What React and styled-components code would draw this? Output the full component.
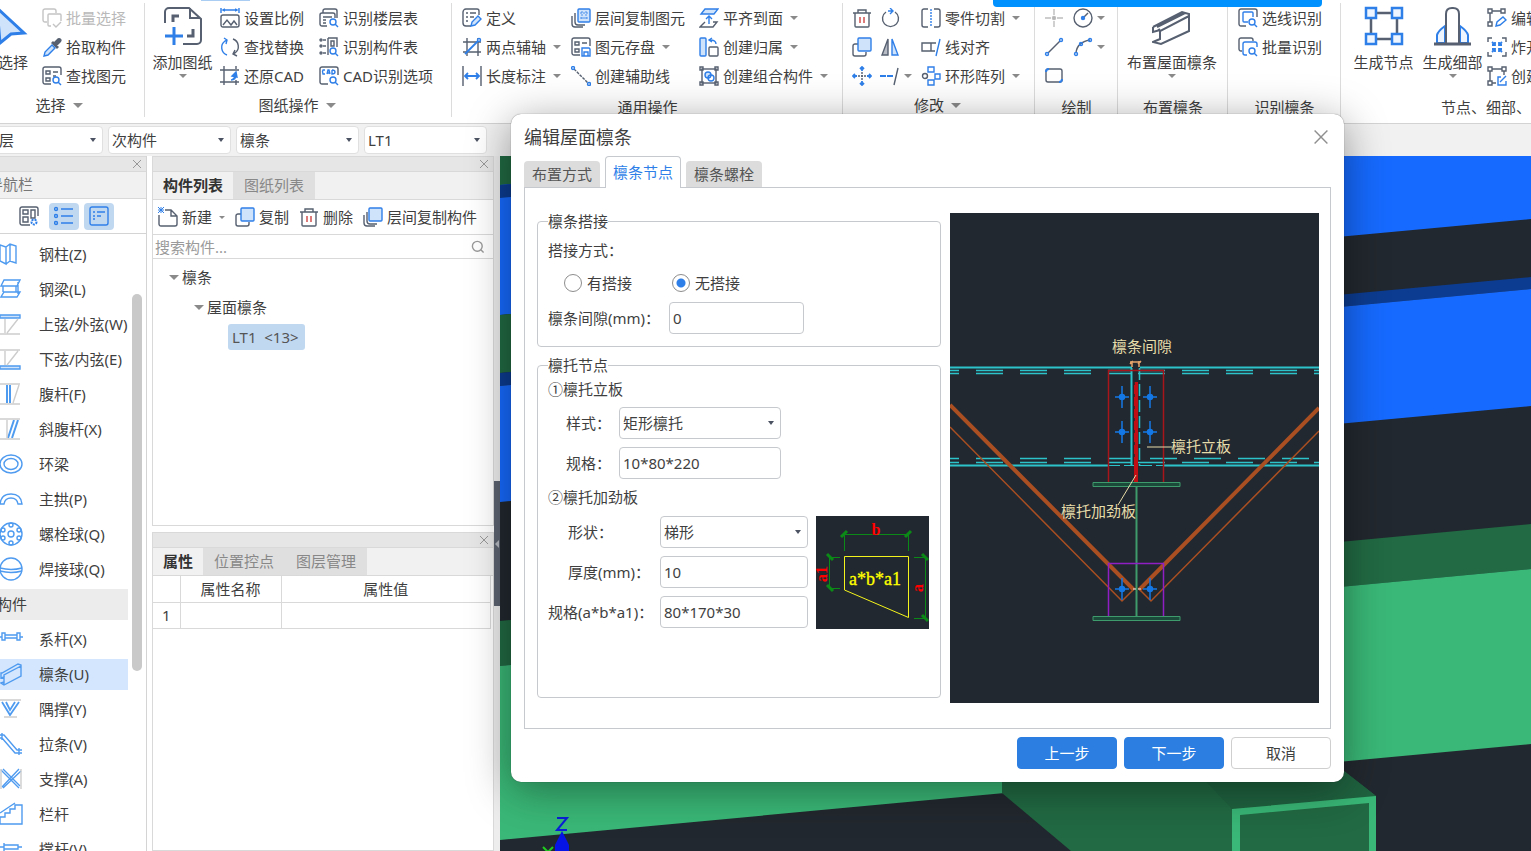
import React, { useState } from 'react';
import styled, { createGlobalStyle, css } from 'styled-components';

const GRAY = '#566070';
const BLUE = '#2f7fe8';
const PALE = '#cfe3fb';
const SKY = '#4f9bf0';
const MIST = '#cdcdcd';

const GlobalStyle = createGlobalStyle`
    * {
        box-sizing: border-box;
    }
    body {
        margin: 0;
        background: #fff;
        color: #3f3f3f;
        font-family: "Noto Sans", "Noto Sans CJK SC", sans-serif;
        font-size: 15px;
        line-height: 18px;
    }
    button, input, select {
        font: inherit;
        color: inherit;
    }
    button {
        padding: 0;
        border: 0;
        background: none;
        white-space: nowrap;
        cursor: pointer;
    }
`;

/* 20 x 20 toolbar glyphs */
const glyphs = {
    batch: <g stroke="#c4c4c4"><path d="M5 14H3a2 2 0 0 1-2-2V3a2 2 0 0 1 2-2h9a2 2 0 0 1 2 2v2" /><path d="M9 18H7a1 1 0 0 1-1-1V7a1 1 0 0 1 1-1h11a1 1 0 0 1 1 1v6M11 16l3 3 5-5" /></g>,
    pick: <><path d="M11 5l5 5-1 1-5-5zM13 5l3-3q2-1 3 1 0 1-1 2l-3 3z" fill={GRAY} /><path d="M10 8l-7 7-1 4 4-1 7-7z" stroke={BLUE} fill={PALE} /></>,
    find: <><path d="M9 18H3a2 2 0 0 1-2-2V3a2 2 0 0 1 2-2h14a2 2 0 0 1 2 2v6M4 5h4v3H4zM11 6h5M4 12h4v3H4zM11 10h3" /><circle cx="14" cy="14" r="3" stroke={BLUE} /><path d="M16 16l3 3" stroke={BLUE} /></>,
    scale: <><path d="M1 0v5M19 0v5M3 2h14M5 1L3 2l2 1M15 1l2 1-2 1" stroke={BLUE} /><rect x="1" y="7" width="18" height="12" rx="2" /><path d="M3 17l4-5 4 5 3-4 3 4" /></>,
    replace: <><path d="M7 18A8 8 0 0 1 5 4l2-1M4 1l3 2-1 4" stroke={BLUE} /><path d="M13 2a8 8 0 0 1 2 14l-2 1M17 19l-4-2 2-4" /></>,
    restore: <><path d="M4 0v19M0 4h19M0 16h19M16 0v3M16 14v5" /><path d="M11 14q5 0 5-5M16 6l-4 4 5 1z" stroke={BLUE} fill={BLUE} /></>,
    floorList: <><path d="M8 18H3a2 2 0 0 1-2-2V7a2 2 0 0 1 2-2h11a2 2 0 0 1 2 2v3M4 5V3a2 2 0 0 1 2-2h10a2 2 0 0 1 2 2v7M4 9h9M4 12h3M4 15h3" /><circle cx="14" cy="14" r="3" stroke={BLUE} /><path d="M16 16l3 3" stroke={BLUE} /></>,
    partList: <><path d="M9 1h9v9M9 1v17M12 4h3v5h-3zM4 3h3M4 9h3M4 16h3" /><circle cx="2" cy="3" r="1" /><circle cx="2" cy="9" r="1" /><circle cx="2" cy="16" r="1" /><circle cx="14" cy="14" r="3" stroke={BLUE} /><path d="M16 16l3 3" stroke={BLUE} /></>,
    cadOptions: <><path d="M9 18H3a2 2 0 0 1-2-2V3a2 2 0 0 1 2-2h14a2 2 0 0 1 2 2v6" /><path d="M6 4H4q-1 1 0 4h2M8 8l1-4h1l1 4M8 7h3M13 4v4q3 0 3-2t-3-2" stroke={BLUE} /><circle cx="14" cy="14" r="3" stroke={BLUE} /><path d="M16 16l3 3" stroke={BLUE} /></>,
    define: <><path d="M9 18H4a3 3 0 0 1-3-3V4a3 3 0 0 1 3-3h11a2 2 0 0 1 2 2v4M4 5h2M8 5h6M4 9h2M8 9h4M4 13h2" /><path d="M9 18l1-4 6-6 3 3-6 6z" stroke={BLUE} fill={PALE} /></>,
    twoPoint: <><path d="M5 1v18M16 1v18M1 5h18M1 15h18" /><path d="M3 17L17 3" stroke={BLUE} strokeWidth="1.8" /><circle cx="17" cy="3" r="1.5" stroke={BLUE} fill="#fff" /></>,
    length: <><path d="M1 0v20M19 0v20" /><path d="M3 10h14M6 7l-3 3 3 3M14 7l3 3-3 3" stroke={BLUE} strokeWidth="1.8" /></>,
    copyLayer: <><path d="M4 5v9a3 3 0 0 0 3 3h7M1 8v8a3 3 0 0 0 3 3h8" /><rect x="7" y="1" width="12" height="13" rx="1" stroke={BLUE} fill={PALE} /><path d="M9 5h8M9 10h8M11 3v9M15 3v9" stroke={BLUE} strokeWidth=".8" strokeDasharray="2 1" /></>,
    copyParts: <><path d="M4 5v9a3 3 0 0 0 3 3h7M1 8v8a3 3 0 0 0 3 3h8" /><rect x="6" y="1" width="13" height="13" rx="1" stroke={BLUE} fill={PALE} /></>,
    saveElement: <><path d="M9 18H3a2 2 0 0 1-2-2V3a2 2 0 0 1 2-2h14a2 2 0 0 1 2 2v6M4 5h4v3H4zM11 6h5M4 12h4v3H4z" /><path d="M11 11h7l1 1v7h-8zM13 19v-4h4v4" stroke={BLUE} /></>,
    guide: <><path d="M3 3l14 14" strokeDasharray="3 1" /><circle cx="2" cy="2" r="1.5" stroke={BLUE} /><circle cx="18" cy="18" r="1.5" stroke={BLUE} /></>,
    alignFace: <><path d="M6 1h13l-4 5H2z" stroke={BLUE} fill={PALE} /><path d="M10 16V8M7 11l3-3 3 3" stroke={BLUE} /><path d="M6 14l-5 5h13l4-5h-4" /></>,
    belong: <><rect x="1" y="1" width="6" height="18" rx="1" stroke={BLUE} fill={PALE} /><rect x="10" y="10" width="9" height="9" rx="1" /><path d="M17 7q0-4-6-4M13 1l-3 2 3 2" stroke={BLUE} /></>,
    combine: <><rect x="3" y="3" width="14" height="14" /><path d="M1 1h3v3H1zM16 1h3v3h-3zM1 16h3v3H1zM16 16h3v3h-3z" /><circle cx="9" cy="9" r="3" stroke={BLUE} fill={PALE} /><circle cx="12" cy="12" r="3" stroke={BLUE} /></>,
    trash: <><path d="M1 5h18M6 5V2h8v3M3 5v13a1 1 0 0 0 1 1h12a1 1 0 0 0 1-1V5" /><path d="M8 9v6M12 9v6" stroke="#cf4444" /></>,
    rotate: <><path d="M6 4a8 8 0 1 0 9 0" /><path d="M8 3h4M10 0l3 3-3 3" stroke={BLUE} /></>,
    copy: <><path d="M6 7H3a2 2 0 0 0-2 2v8a2 2 0 0 0 2 2h9a2 2 0 0 0 2-2v-2" /><rect x="6" y="1" width="13" height="13" rx="1" stroke={BLUE} fill={PALE} /></>,
    mirror: <><path d="M8 2v16H2z" fill="#b7bcc4" /><path d="M12 2v16h6z" stroke={BLUE} fill={PALE} /></>,
    move: <><path d="M10 6v8M6 10h8" strokeDasharray="2 1" /><path d="M10 5V1M8 3l2-2 2 2M10 15v4M8 17l2 2 2-2M5 10H1M3 8l-2 2 2 2M15 10h4M17 8l2 2-2 2" stroke={BLUE} strokeWidth="1.8" /></>,
    split: <><path d="M0 10h14" stroke={BLUE} strokeDasharray="6 1" strokeWidth="1.8" /><path d="M18 2l-4 17" /></>,
    cutPart: <><path d="M7 1H3a2 2 0 0 0-2 2v14a2 2 0 0 0 2 2h4M13 1h4a2 2 0 0 1 2 2v14a2 2 0 0 1-2 2h-4" /><path d="M10 1v18" stroke={BLUE} strokeDasharray="2 1" /></>,
    alignLine: <><path d="M10 6H1v8h9zM10 6h5M10 14h4" /><path d="M19 2l-4 17" stroke={BLUE} /></>,
    array: <><path d="M7 1h6v5H7z" stroke={BLUE} /><circle cx="4" cy="10" r="2.5" /><path d="M14 8h5v5h-5zM7 14h6v5H7z" stroke={BLUE} /></>,
    point: <g stroke="#bdbdbd"><path d="M10 1v6M10 13v6M1 10h6M13 10h6" /><circle cx="10" cy="10" r="1.5" fill="#aaa" /></g>,
    circle: <><circle cx="10" cy="10" r="9" /><path d="M10 10l5-5" /><circle cx="10" cy="10" r="1.5" stroke={BLUE} fill={BLUE} /></>,
    line: <><path d="M4 16L16 4" /><circle cx="3" cy="17" r="1.5" stroke={BLUE} /><circle cx="17" cy="3" r="1.5" stroke={BLUE} /></>,
    arc: <><path d="M3 16Q4 5 17 3" /><circle cx="3" cy="17" r="1.5" stroke={BLUE} /><circle cx="8" cy="7" r="1.5" stroke={BLUE} /><circle cx="17" cy="3" r="1.5" stroke={BLUE} /></>,
    rect: <><rect x="2" y="3" width="16" height="13" rx="2" /><path d="M2 6q0-3 3-3M18 13q0 3-3 3" stroke={BLUE} strokeWidth="2" /></>,
    lineDetect: <><path d="M8 18H3a2 2 0 0 1-2-2V3a2 2 0 0 1 2-2h14a2 2 0 0 1 2 2v6" /><path d="M10 14H6a1 1 0 0 1-1-1V5a1 1 0 0 1 1-1h8a1 1 0 0 1 1 1v4" stroke={BLUE} /><circle cx="14" cy="14" r="3" stroke={BLUE} /><path d="M16 16l3 3" stroke={BLUE} /></>,
    batchDetect: <><path d="M4 14H3a2 2 0 0 1-2-2V3a2 2 0 0 1 2-2h10a2 2 0 0 1 2 2v1" /><path d="M9 18H7a2 2 0 0 1-2-2V7a2 2 0 0 1 2-2h10a2 2 0 0 1 2 2v3" stroke={BLUE} /><circle cx="14" cy="14" r="3" stroke={BLUE} /><path d="M16 16l3 3" stroke={BLUE} /></>,
    editNode: <><path d="M1 1h4v4H1zM14 1h4v4h-4zM1 14h4v4H1zM5 3h9M3 5v9" /><path d="M9 18l1-4 6-5 3 3-6 5z" stroke={BLUE} /></>,
    explode: <><path d="M1 5V1h4M15 1h4v4M1 15v4h4M15 19h4v-4" /><path d="M5 5l3 3M15 5l-3 3M5 15l3-3M15 15l-3-3M5 8h3V5M12 5v3h3M5 12h3v3M12 15v-3h3" stroke={BLUE} strokeWidth="1.8" /></>,
    createNode: <><path d="M1 1h4v4H1zM15 1h4v4h-4zM1 15h4v4H1zM5 3h10M3 5v10M17 5v4M5 17h4" /><path d="M14 11h-3v8h8v-4M13 16l6-6" stroke={BLUE} /></>,
    add: <><path d="M7 3h6l6 6v8a2 2 0 0 1-2 2H3a2 2 0 0 1-2-2V8M13 3v6h6" /><path d="M0 0l6 6M6 0L0 6M3 0v6M0 3h6" stroke={BLUE} strokeWidth="1" /></>,
    modules: <><path d="M11 19H3a2 2 0 0 1-2-2V3a2 2 0 0 1 2-2h14a2 2 0 0 1 2 2v7M4 4h5v4H4zM12 4h4v8h-4zM4 11h5v5H4z" /><circle cx="15" cy="16" r="2.5" stroke={BLUE} strokeDasharray="2 1" strokeWidth="2" /></>,
    list: <g stroke={BLUE}><path d="M7 3h12M7 10h12M7 17h12" /><circle cx="2" cy="3" r="1.5" /><circle cx="2" cy="10" r="1.5" /><circle cx="2" cy="17" r="1.5" /></g>,
    detail: <g stroke={BLUE}><rect x="1" y="1" width="18" height="18" rx="2" /><path d="M4 6h2M8 6h8M4 10h2M8 10h4M4 13h2" /></g>,
    search: <g stroke="#9a9a9a" strokeWidth="2"><circle cx="9" cy="9" r="7" /><path d="M14 14l4 4" /></g>,
    close: <path d="M2 2l16 16M18 2L2 18" stroke="#8f8f8f" strokeWidth="1.8" />
};

/* 40 x 40 glyphs above the big ribbon buttons */
const bigGlyphs = {
    cursor: <path d="M4 2L31 27 18 28 7 37z" stroke={BLUE} fill={PALE} strokeWidth="3" />,
    addSheet: <><path d="M2 17V6a4 4 0 0 1 4-4h20l12 11v21a4 4 0 0 1-4 4H20M27 2v10h10" /><path d="M10 16v-6h6M24 30h6v-7" strokeWidth="3" /><path d="M11 21v18M2 30h18" stroke={BLUE} strokeWidth="3" /></>,
    purlin: <path d="M1 21L30 6l7 2v17L9 38l-8-2 7-3V25L37 10M1 21v5l7-2M5 21L33 7M5 25l3-2" />,
    node: <><path d="M11 7h18M7 11v18M33 11v18M11 33h18" strokeWidth="2.5" /><path d="M2 2h10v10H2zM28 2h10v10H28zM2 28h10v10H2zM28 28h10v10H28z" stroke={BLUE} fill="#eef5ff" strokeWidth="2.5" /></>,
    part: <><path d="M12 20q-7 5-8 9v8h8zM27 20q7 5 8 9v8h-8z" stroke={BLUE} fill="#eef5ff" /><path d="M13 37V8q0-6 6-6h1q6 0 6 6v29" fill="#fff" /><path d="M1 38h37" strokeWidth="3" /></>
};

/* 24 x 24 member glyphs */
const memberGlyphs = {
    column: <path d="M1 3l6 2v17l-6-3zM7 5l4-3 6 2v17l-6-2-4 3M11 2v17" />,
    beam: <path d="M5 3h16l-3 6H2zM4 9v6M17 9v6M5 15h16l-3 5H2zM19 5v12" />,
    topChord: <><path d="M1 3h20v3H1z" fill={PALE} /><path d="M6 7v14M19 7L8 21M1 22h20" stroke={MIST} /></>,
    bottomChord: <><path d="M1 19h20v3H1z" fill={PALE} /><path d="M6 4v14M19 4L8 18M1 3h20" stroke={MIST} /></>,
    web: <><path d="M8 3v18M11 3v18" strokeWidth="2" /><path d="M1 2h20M1 22h20M20 3l-6 18" stroke={MIST} /></>,
    diagonal: <><path d="M15 3L9 21M19 3l-6 18" strokeWidth="2" /><path d="M1 2h20M1 22h20M8 3v18" stroke={MIST} /></>,
    ring: <><ellipse cx="12" cy="12" rx="11" ry="9" /><ellipse cx="12" cy="12" rx="7" ry="5.5" /></>,
    arch: <path d="M1 17q1-10 11-10t11 10h-4q-1-6-7-6t-7 6z" />,
    boltBall: <><circle cx="12" cy="12" r="11" /><circle cx="12" cy="12" r="3" /><circle cx="12" cy="3" r="2" /><circle cx="12" cy="21" r="2" /><circle cx="4" cy="8" r="2" /><circle cx="20" cy="8" r="2" /><circle cx="4" cy="16" r="2" /><circle cx="20" cy="16" r="2" /></>,
    weldBall: <><circle cx="12" cy="12" r="11" /><path d="M1 11q11 3 22 0M1 14q11 3 22 0" /></>,
    tie: <path d="M6 8h12M6 11h12M3 6h3v7H3zM18 6h3v7h-3zM0 10h3M21 10h3" />,
    purlin: <path d="M2 11v5l3-1v5l-3 1 3 2 17-9V3l-3-1L3 11zM5 16V13L22 4M5 22v-5" />,
    knee: <><path d="M3 5l8 13L20 5M7 5l4 8 5-8" strokeWidth="1.8" /><path d="M1 3h21M5 20h13" stroke={MIST} /></>,
    brace: <path d="M1 3h4l13 15h5M1 6h2l13 15h7M3 1v7M20 16v7" />,
    cross: <><path d="M2 3l18 18M4 2l17 17M20 2L3 20M22 4L4 21" /><path d="M2 2v20M22 2v20" stroke={MIST} /></>,
    railing: <path d="M1 22v-7h5v-4h5V7h5V3h7v19zM1 11L16 1" />,
    strut: <path d="M5 8h14v4H5zM1 10h4M19 10h4M5 6v8" />
};

const Svg = styled.svg`
    flex: none;
    display: block;
    width: ${props => props.$size}px;
    height: ${props => props.$size}px;
    fill: none;
`;

const Glyph = ({ name, size = 20 }) => (
    <Svg $size={size} viewBox="0 0 20 20" stroke={GRAY} strokeWidth="1.4" aria-hidden="true">
        {glyphs[name]}
    </Svg>
);

const Caret = styled.i`
    flex: none;
    width: 0;
    height: 0;
    border: ${props => props.$size || 4}px solid transparent;
    border-top-color: #8a8a8a;
    border-bottom-width: 0;
`;

/* the left edge of the window runs past the screen */
const Screen = styled.div`
    position: relative;
    height: 100vh;
    overflow: hidden;
`;

const Shell = styled.div`
    display: flex;
    flex-direction: column;
    height: 100%;
    margin-left: -24px;
`;

const Notice = styled.div`
    position: absolute;
    top: 0;
    left: 993px;
    right: 209px;
    height: 7px;
    border-radius: 0 0 4px 4px;
    background: #0091ff;
`;

const Accent = styled.div`
    position: absolute;
    top: 0;
    left: 201px;
    width: 49px;
    height: 1px;
    background: #a9cdf3;
`;

const Ribbon = styled.header`
    display: flex;
    flex: none;
    height: 124px;
    border-bottom: 1px solid #d3d3d3;
`;

const Group = styled.section`
    position: relative;
    flex: none;
    width: ${props => props.$width}px;
    &::after {
        content: '';
        position: absolute;
        top: 3px;
        right: 0;
        bottom: 6px;
        width: 1px;
        background: #dcdcdc;
    }
`;

const Tools = styled.div`
    display: flex;
    height: 90px;
    padding: 3px 0 0 ${props => props.$indent || 0}px;
`;

const Column = styled.div`
    flex: none;
    width: ${props => (props.$width ? `${props.$width}px` : 'auto')};
`;

const Tool = styled.button`
    display: flex;
    align-items: center;
    gap: 4px;
    height: 29px;
    color: ${props => (props.disabled ? '#b9b9b9' : 'inherit')};
    ${Caret} {
        margin-left: ${props => (props.$bare ? 0 : 3)}px;
    }
`;

const BigTool = styled.button`
    flex: none;
    display: flex;
    flex-direction: column;
    align-items: center;
    width: ${props => props.$width}px;
    padding-top: 3px;
    span {
        margin-top: 6px;
        line-height: 20px;
    }
    ${Caret} {
        margin-top: 2px;
    }
`;

const GroupLabel = styled.div`
    display: flex;
    align-items: center;
    justify-content: center;
    gap: 7px;
    padding: ${props => (props.$expand ? '6px 3px 0 0' : '8px 0 0')};
`;

const ribbon = [
    {
        label: '选择', expand: true, width: 169, indent: 8,
        big: [{ icon: 'cursor', text: '选择', width: 58 }],
        columns: [{ tools: [['batch', '批量选择', false, true], ['pick', '拾取构件'], ['find', '查找图元']] }]
    },
    {
        label: '图纸操作', expand: true, width: 307,
        big: [{ icon: 'addSheet', text: '添加图纸', caret: true, width: 75 }],
        columns: [
            { width: 99, tools: [['scale', '设置比例'], ['replace', '查找替换'], ['restore', '还原CAD']] },
            { tools: [['floorList', '识别楼层表'], ['partList', '识别构件表'], ['cadOptions', 'CAD识别选项']] }
        ]
    },
    {
        label: '通用操作', width: 391, indent: 10,
        columns: [
            { width: 109, tools: [['define', '定义'], ['twoPoint', '两点辅轴', true], ['length', '长度标注', true]] },
            { width: 128, tools: [['copyLayer', '层间复制图元'], ['saveElement', '图元存盘', true], ['guide', '创建辅助线']] },
            { tools: [['alignFace', '平齐到面', true], ['belong', '创建归属', true], ['combine', '创建组合构件', true]] }
        ]
    },
    {
        label: '修改', expand: true, width: 192, indent: 9,
        columns: [
            { width: 28, tools: [['trash'], ['copy'], ['move']] },
            { width: 41, tools: [['rotate'], ['mirror'], ['split', '', true]] },
            { tools: [['cutPart', '零件切割', true], ['alignLine', '线对齐'], ['array', '环形阵列', true]] }
        ]
    },
    {
        label: '绘制', width: 83, indent: 9,
        columns: [
            { width: 29, tools: [['point'], ['line'], ['rect']] },
            { tools: [['circle', '', true], ['arc', '', true]] }
        ]
    },
    {
        label: '布置檩条', width: 110,
        big: [{ icon: 'purlin', text: '布置屋面檩条', caret: true, width: 108 }],
        columns: []
    },
    {
        label: '识别檩条', width: 113, indent: 10,
        columns: [{ tools: [['lineDetect', '选线识别'], ['batchDetect', '批量识别']] }]
    },
    {
        label: '节点、细部、零件', width: 320, indent: 8,
        big: [
            { icon: 'node', text: '生成节点', width: 69 },
            { icon: 'part', text: '生成细部', caret: true, width: 69 }
        ],
        columns: [{ tools: [['editNode', '编辑节点'], ['explode', '炸开节点'], ['createNode', '创建节点']] }]
    }
];

const RibbonGroup = ({ group }) => (
    <Group $width={group.width}>
        <Tools $indent={group.indent}>
            {(group.big || []).map(item => (
                <BigTool key={item.text} $width={item.width}>
                    <Svg $size={40} viewBox="0 0 40 40" stroke={GRAY} strokeWidth="2" aria-hidden="true">
                        {bigGlyphs[item.icon]}
                    </Svg>
                    <span>{item.text}</span>
                    {item.caret && <Caret />}
                </BigTool>
            ))}
            {group.columns.map((column, i) => (
                <Column key={i} $width={column.width}>
                    {column.tools.map(([icon, text, caret, disabled]) => (
                        <Tool key={icon} disabled={disabled} $bare={!text} aria-label={text || icon}>
                            <Glyph name={icon} />
                            {text}
                            {caret && <Caret />}
                        </Tool>
                    ))}
                </Column>
            ))}
        </Tools>
        <GroupLabel $expand={group.expand}>
            {group.label}
            {group.expand && <Caret $size={5} />}
        </GroupLabel>
    </Group>
);

const FilterBar = styled.div`
    display: flex;
    flex: none;
    align-items: center;
    gap: 5px;
    height: 32px;
    padding-left: 4px;
    background: #f1f1f1;
`;

const Picker = styled.span`
    position: relative;
    display: block;
    flex: none;
    width: ${props => props.$width}px;
    select {
        appearance: none;
        display: block;
        width: 100%;
        height: ${props => props.$height}px;
        padding: 0 20px 0 3px;
        border: 1px solid ${props => props.$line || '#c6c9cd'};
        border-radius: 4px;
        background: #fff;
        outline: 0;
    }
    &::after {
        content: '';
        position: absolute;
        top: 50%;
        right: 7px;
        margin-top: -2px;
        border: 3px solid transparent;
        border-top: 4px solid #4b5261;
        border-bottom: 0;
        pointer-events: none;
    }
`;

const Workspace = styled.main`
    display: flex;
    flex: 1;
    min-height: 0;
`;

const Nav = styled.nav`
    display: flex;
    flex: none;
    flex-direction: column;
    width: 171px;
    margin-right: 5px;
    border-right: 1px solid #d4d4d4;
`;

const Grip = styled.div`
    display: flex;
    flex: none;
    align-items: center;
    justify-content: flex-end;
    height: 16px;
    padding-right: 4px;
    border: solid #d9d9d9;
    border-width: 1px 0;
    background: #e6e6e6;
`;

const NavTitle = styled.div`
    flex: none;
    height: 27px;
    padding: 3px 0 0 12px;
    border-bottom: 1px solid #d9d9d9;
    background: #f1f1f1;
    color: #777;
`;

const NavModes = styled.div`
    display: flex;
    flex: none;
    align-items: center;
    gap: 5px;
    height: 35px;
    padding-left: 38px;
    border-bottom: 1px solid #d4d4d4;
`;

const Mode = styled.button`
    display: grid;
    place-items: center;
    width: 30px;
    height: 27px;
    border-radius: 4px;
    background: ${props => (props.$on ? '#c1d8f1' : 'transparent')};
`;

const NavBody = styled.div`
    display: flex;
    flex: 1;
    min-height: 0;
    overflow: hidden;
`;

const Members = styled.ul`
    display: flex;
    flex: 1;
    flex-direction: column;
    gap: 4px;
    min-width: 0;
    margin: 0;
    padding: 5px 0 0;
    list-style: none;
`;

const member = css`
    display: flex;
    align-items: center;
    width: 100%;
    height: 31px;
    padding-bottom: 2px;
    overflow: hidden;
    white-space: nowrap;
`;

const Member = styled.button`
    ${member}
    gap: 16px;
    padding-left: 23px;
    background: ${props => (props.$active ? '#d3e6fd' : 'transparent')};
`;

const MemberHeading = styled.div`
    ${member}
    padding-left: 6px;
    background: #ececec;
`;

const ScrollTrack = styled.div`
    flex: none;
    width: 18px;
    padding: 60px 4px 0;
`;

const ScrollThumb = styled.div`
    height: 377px;
    border-radius: 5px;
    background: #c9c9c9;
`;

const members = [
    ['column', '钢柱(Z)'],
    ['beam', '钢梁(L)'],
    ['topChord', '上弦/外弦(W)'],
    ['bottomChord', '下弦/内弦(E)'],
    ['web', '腹杆(F)'],
    ['diagonal', '斜腹杆(X)'],
    ['ring', '环梁'],
    ['arch', '主拱(P)'],
    ['boltBall', '螺栓球(Q)'],
    ['weldBall', '焊接球(Q)'],
    [null, '次构件'],
    ['tie', '系杆(X)'],
    ['purlin', '檩条(U)'],
    ['knee', '隅撑(Y)'],
    ['brace', '拉条(V)'],
    ['cross', '支撑(A)'],
    ['railing', '栏杆'],
    ['strut', '撑杆(V)']
];

const Side = styled.div`
    display: flex;
    flex: none;
    flex-direction: column;
    gap: 6px;
    width: 342px;
`;

const Panel = styled.section`
    display: flex;
    flex: ${props => (props.$height ? 'none' : 1)};
    flex-direction: column;
    height: ${props => (props.$height ? `${props.$height}px` : 'auto')};
    border: 1px solid #d9d9d9;
    border-top: 0;
`;

const PanelTabs = styled.div`
    display: flex;
    flex: none;
    height: 28px;
    border-bottom: 1px solid #d9d9d9;
    background: #f1f1f1;
`;

const PanelTab = styled.button`
    padding: 0 ${props => (props.$active ? 10 : 11)}px 2px;
    background: ${props => (props.$active ? '#f1f1f1' : '#dfdfdf')};
    color: ${props => (props.$active ? '#333' : '#888')};
    font-weight: ${props => (props.$active ? 'bold' : 'normal')};
`;

const PanelTools = styled.div`
    display: flex;
    flex: none;
    align-items: center;
    gap: 10px;
    height: 35px;
    padding-left: 5px;
    border-bottom: 1px solid #d9d9d9;
`;

const SearchBox = styled.label`
    display: flex;
    flex: none;
    align-items: center;
    height: 24px;
    padding: 0 8px 0 2px;
    border-bottom: 1px solid #d9d9d9;
    input {
        flex: 1;
        min-width: 0;
        padding: 0;
        border: 0;
        outline: 0;
        background: none;
    }
    input::placeholder {
        color: #9a9a9a;
        opacity: 1;
    }
`;

const Tree = styled.div`
    padding-top: 3px;
`;

const Branch = styled.div`
    display: flex;
    align-items: center;
    gap: 3px;
    height: 30px;
    padding-left: ${props => props.$indent}px;
`;

const Leaf = styled.button`
    height: 26px;
    padding: 0 6px 0 4px;
    border-radius: 3px;
    background: #c1d8f1;
    color: #555;
`;

const Properties = styled.table`
    width: 338px;
    border-collapse: collapse;
    table-layout: fixed;
    th, td {
        height: 26px;
        padding: 0;
        border: 1px solid #d9d9d9;
        border-top: 0;
        font-weight: normal;
        text-align: center;
    }
    th:first-child, td:first-child {
        width: 27px;
        border-left: 0;
    }
    th:nth-child(2) {
        width: 101px;
    }
`;

const Splitter = styled.div`
    flex: none;
    width: 6px;
    padding-top: 325px;
    background: #ededed;
`;

const SplitterHandle = styled.button`
    display: flex;
    align-items: center;
    justify-content: center;
    width: 100%;
    height: 125px;
    background: #5c6370;
    &::before {
        content: '';
        border: 4px solid transparent;
        border-right-color: #b5b9c0;
        border-left: 0;
    }
`;

const Viewport = styled.div`
    flex: 1;
    min-width: 0;
    background: #22282f;
    svg {
        display: block;
        width: 100%;
        height: 100%;
    }
`;

const Scene = () => (
    <svg viewBox="500 156 1031 695" preserveAspectRatio="xMinYMin slice" aria-hidden="true">
        <path d="M500 156H1531V219L500 315z" fill="#166aff" />
        <path d="M500 156h60v23l-60 6z" fill="#216a43" />
        <path d="M500 185l60-6v13l-60 6z" fill="#0c3c91" />
        <path d="M500 315l60-6v58l-60 6z" fill="#216a43" />
        <path d="M500 373L1531 277V289L500 386z" fill="#0c3c91" />
        <path d="M500 386L1531 289V406L500 502z" fill="#166aff" />
        <path d="M500 621L1531 524V569L500 666z" fill="#216a43" />
        <path d="M500 666L1531 569V744L500 840z" fill="#3ab877" />
        <path d="M1002 780H1344V771L1376 796V851H1071L1002 793z" fill="#216a43" />
        <path d="M1195 770h149v1l32 25-144 13z" fill="#1f6340" />
        <path d="M1232 851V809L1376 796V851H1369V803L1240 815V851z" fill="#3ab877" />
        <path d="M557 818h10l-10 12h10" stroke="#0a1fd8" strokeWidth="2" fill="none" />
        <path d="M562 831l7 14v6h-14v-6z" fill="#0714e6" />
        <path d="M543 847l5 5 5-5" stroke="#1fce1f" strokeWidth="2" fill="none" />
    </svg>
);

const Layer = styled.div`
    position: absolute;
    inset: 0;
    display: flex;
    align-items: flex-start;
    padding: 114px 187px 0 511px;
`;

const Dialog = styled.div`
    flex: 1;
    min-width: 820px;
    padding: 0 13px 13px;
    border-radius: 10px;
    background: #fff;
    box-shadow: 0 0 1px rgba(0, 0, 0, 0.6), 0 8px 44px rgba(0, 0, 0, 0.4);
`;

const TitleBar = styled.div`
    display: flex;
    align-items: center;
    justify-content: space-between;
    height: 42px;
    padding: 4px 2px 0 0;
    h1 {
        margin: 0;
        font-size: 18px;
        font-weight: normal;
    }
`;

const Tabs = styled.div`
    display: flex;
    align-items: flex-end;
    gap: 5px;
    height: 31px;
`;

const Tab = styled.button`
    height: 26px;
    padding: 0 8px;
    border-radius: 4px 4px 0 0;
    background: #dcdcdc;
    color: #555;
    ${props => props.$active && css`
        height: 32px;
        margin-bottom: -1px;
        padding: 0 7px 2px;
        border: 1px solid #c6c9cd;
        border-bottom: 0;
        background: #fff;
        color: ${BLUE};
    `}
`;

const Body = styled.div`
    display: flex;
    gap: 9px;
    padding: 25px 11px 25px 12px;
    border: 1px solid #c6c9cd;
`;

const Form = styled.form`
    display: flex;
    flex: none;
    flex-direction: column;
    gap: 10px;
    width: 404px;
    padding-bottom: 5px;
`;

const Fieldset = styled.fieldset`
    flex: ${props => (props.$grow ? 1 : 'none')};
    min-width: 0;
    margin: 0;
    padding: 0 10px 12px;
    border: 1px solid #c6c9cd;
    border-radius: 4px;
    legend {
        padding: 0;
        line-height: 17px;
        margin-bottom: 1px;
    }
`;

const Caption = styled.div`
    display: flex;
    align-items: center;
    height: ${props => (props.$tall ? 38 : 28)}px;
`;

const Radios = styled.div`
    display: flex;
    height: 28px;
    margin-bottom: 5px;
    padding-left: 16px;
`;

const Radio = styled.label`
    display: flex;
    align-items: center;
    gap: 5px;
    width: 108px;
    input {
        appearance: none;
        width: 18px;
        height: 18px;
        margin: 0;
        border: 1px solid #8d8d8d;
        border-radius: 50%;
        background: #fff;
    }
    input:checked {
        background: radial-gradient(circle, ${BLUE} 4px, #fff 5px);
    }
`;

const Field = styled.div`
    display: flex;
    align-items: center;
    height: ${props => (props.$tight ? 32 : 40)}px;
    label {
        flex: none;
        width: ${props => props.$label}px;
        padding-left: ${props => props.$indent || 0}px;
        white-space: nowrap;
    }
`;

const TextBox = styled.input`
    width: ${props => props.$width}px;
    height: 32px;
    padding: 0 3px;
    border: 1px solid #c6c9cd;
    border-radius: 4px;
    background: #fff;
    outline: 0;
`;

const Stiffener = styled.div`
    display: flex;
    align-items: center;
    gap: 8px;
    padding-top: 1px;
`;

const Thumb = styled.svg`
    flex: none;
    width: 113px;
    height: 113px;
    background: #22282f;
    fill: none;
    font-family: "Liberation Serif", serif;
`;

const Drawing = styled.svg`
    flex: 1;
    min-width: 0;
    height: 490px;
    background: #22282f;
    fill: none;
    font-size: 15px;
`;

const StiffenerSketch = () => (
    <Thumb viewBox="0 0 113 113" role="img" aria-label="a*b*a1">
        <g stroke="#0b8a17">
            <path d="M28.5 18.5h64M28.5 16v19M92.500 16v19M13.500 41v31M14 41.500h10M14 72.500h10M109.500 41v61M98 41.500h12M98 102.500h12" />
            <path d="M25 21l6-6M89 21l6-6M11 38l6 6M11 69l6 6M106 38l6 6M106 99l6 6" strokeWidth="3" />
        </g>
        <path d="M28.5 40.5h64v61L28.500 74z" stroke="#f4f41c" />
        <g fill="#f00" fontSize="16" fontWeight="bold" textAnchor="middle">
            <text x="60" y="19">b</text>
            <text transform="translate(11 58) rotate(-90)">a1</text>
            <text transform="translate(107 72) rotate(-90)">a</text>
        </g>
        <text x="33" y="69" fill="#ff0" stroke="#ff0" strokeWidth=".3" fontSize="18">a*b*a1</text>
    </Thumb>
);

const bolts = [[172, 184], [200, 184], [172, 219], [200, 219], [172, 376], [200, 376]];

const NodeDrawing = () => (
    <Drawing viewBox="0 0 369 490" preserveAspectRatio="xMidYMid slice" role="img" aria-label="檩条节点">
        <g stroke="#2cc3cb">
            <path d="M0 154.500H182M190 154.500H369M0 252.500H158M213 252.500H369" strokeWidth="2" />
            <path d="M158 252.500H213" strokeDasharray="12 4" />
            <path d="M-18 157.500H182M-18 160.500H182M-18 245.500H182M-18 249.500H182" strokeDasharray="27 17" strokeWidth="1.5" />
            <path d="M188 157.500H369M188 160.500H369M188 249.500H369M200 245.500H369" strokeDasharray="27 17" strokeWidth="1.5" />
            <path d="M181.500 155V253" strokeWidth="2" />
            <path d="M189.500 155V253" strokeDasharray="12 4" strokeWidth="1.5" />
        </g>
        <path d="M158.500 269V157.500H213.500V269" stroke="#a8161c" strokeWidth="1.5" />
        <path d="M184 169h4v100h-4z" fill="#c10e14" />
        <path d="M184 169v84" stroke="#22282f" strokeDasharray="3 9" strokeWidth="1.5" />
        <g stroke="#a94f22">
            <path d="M0 192L184 377M369 195L189 377" strokeWidth="4" />
            <path d="M0 214L172 388 184 376M369 218L201 388 189 376" strokeWidth="1.5" />
        </g>
        <g stroke="#3d9b6c">
            <path d="M143 269.500H230V273.500H143zM143 403.500H230V407.500H143z" fill="#1c4a3a" />
            <path d="M186.500 274V403" strokeWidth="2" />
        </g>
        <path d="M158.500 403V350.500H213.500V403" stroke="#8f1fc4" strokeWidth="1.5" />
        <path d="M183 376h3M188 376h3" stroke="#f2f2f2" />
        <g stroke="#1478e6" strokeWidth="1.5">
            {bolts.map(([x, y]) => (
                <g key={`${x}-${y}`}>
                    <path d={`M${x - 7} ${y}h14M${x} ${y - 11}v22`} />
                    <circle cx={x} cy={y} r="2.5" fill="#1478e6" />
                </g>
            ))}
        </g>
        <path d="M180 149h11M182 148v6M189 148v6M180 151l3-3M188 151l3-3" stroke="#e5a36a" strokeWidth="1.5" />
        <path d="M197 234h25M168 292l18-30" stroke="#e6dcaa" />
        <g fill="#e6dcaa">
            <text x="162" y="139">檩条间隙</text>
            <text x="221" y="239">檩托立板</text>
            <text x="111" y="304">檩托加劲板</text>
        </g>
    </Drawing>
);

const Footer = styled.div`
    display: flex;
    justify-content: flex-end;
    gap: 7px;
    padding-top: 8px;
`;

const Action = styled.button`
    width: 100px;
    height: 32px;
    border: 1px solid ${props => (props.$primary ? '#2c7fe0' : '#cfcfcf')};
    border-radius: 4px;
    background: ${props => (props.$primary ? '#2c7fe0' : '#fff')};
    color: ${props => (props.$primary ? '#fff' : '#3f3f3f')};
`;

const EditDialog = () => {
    const [lap, setLap] = useState('none');
    return (
        <Layer>
            <Dialog role="dialog" aria-labelledby="dialog-title">
                <TitleBar>
                    <h1 id="dialog-title">编辑屋面檩条</h1>
                    <button aria-label="关闭"><Glyph name="close" size={16} /></button>
                </TitleBar>
                <Tabs>
                    <Tab>布置方式</Tab>
                    <Tab $active>檩条节点</Tab>
                    <Tab>檩条螺栓</Tab>
                </Tabs>
                <Body>
                    <Form>
                        <Fieldset>
                            <legend>檩条搭接</legend>
                            <Caption $tall>搭接方式：</Caption>
                            <Radios>
                                <Radio>
                                    <input type="radio" name="lap" checked={lap === 'lap'} onChange={() => setLap('lap')} />
                                    有搭接
                                </Radio>
                                <Radio>
                                    <input type="radio" name="lap" checked={lap === 'none'} onChange={() => setLap('none')} />
                                    无搭接
                                </Radio>
                            </Radios>
                            <Field $label={121} $tight>
                                <label htmlFor="gap">檩条间隙(mm)：</label>
                                <TextBox id="gap" $width={135} defaultValue="0" />
                            </Field>
                        </Fieldset>
                        <Fieldset $grow>
                            <legend>檩托节点</legend>
                            <Caption>①檩托立板</Caption>
                            <Field $label={71} $indent={18}>
                                <label htmlFor="style">样式：</label>
                                <Picker $width={162} $height={32}>
                                    <select id="style"><option>矩形檩托</option></select>
                                </Picker>
                            </Field>
                            <Field $label={71} $indent={18}>
                                <label htmlFor="spec">规格：</label>
                                <TextBox id="spec" $width={162} defaultValue="10*80*220" />
                            </Field>
                            <Caption>②檩托加劲板</Caption>
                            <Stiffener>
                                <div>
                                    <Field $label={112} $indent={20}>
                                        <label htmlFor="shape">形状：</label>
                                        <Picker $width={148} $height={32}>
                                            <select id="shape"><option>梯形</option></select>
                                        </Picker>
                                    </Field>
                                    <Field $label={112} $indent={20}>
                                        <label htmlFor="thickness">厚度(mm)：</label>
                                        <TextBox id="thickness" $width={148} defaultValue="10" />
                                    </Field>
                                    <Field $label={112}>
                                        <label htmlFor="size">规格(a*b*a1)：</label>
                                        <TextBox id="size" $width={148} defaultValue="80*170*30" />
                                    </Field>
                                </div>
                                <StiffenerSketch />
                            </Stiffener>
                        </Fieldset>
                    </Form>
                    <NodeDrawing />
                </Body>
                <Footer>
                    <Action $primary>上一步</Action>
                    <Action $primary>下一步</Action>
                    <Action>取消</Action>
                </Footer>
            </Dialog>
        </Layer>
    );
};

const PanelGrip = () => (
    <Grip>
        <button aria-label="关闭"><Glyph name="close" size={10} /></button>
    </Grip>
);

const App = () => (
    <Screen>
        <GlobalStyle />
        <Shell>
            <Ribbon>
                {ribbon.map(group => <RibbonGroup key={group.label} group={group} />)}
            </Ribbon>
            <FilterBar>
                {['首层', '次构件', '檩条', 'LT1'].map(value => (
                    <Picker key={value} $width={123} $height={28} $line="#e0e0e0">
                        <select aria-label={value}><option>{value}</option></select>
                    </Picker>
                ))}
            </FilterBar>
            <Workspace>
                <Nav>
                    <PanelGrip />
                    <NavTitle>导航栏</NavTitle>
                    <NavModes>
                        <Mode aria-label="模块"><Glyph name="modules" /></Mode>
                        <Mode $on aria-label="列表"><Glyph name="list" /></Mode>
                        <Mode $on aria-label="详情"><Glyph name="detail" /></Mode>
                    </NavModes>
                    <NavBody>
                        <Members>
                            {members.map(([icon, text]) => (
                                <li key={text}>
                                    {icon ? (
                                        <Member $active={icon === 'purlin'}>
                                            <Svg $size={24} viewBox="0 0 24 24" stroke={SKY} strokeWidth="1.4" aria-hidden="true">
                                                {memberGlyphs[icon]}
                                            </Svg>
                                            {text}
                                        </Member>
                                    ) : (
                                        <MemberHeading>{text}</MemberHeading>
                                    )}
                                </li>
                            ))}
                        </Members>
                        <ScrollTrack><ScrollThumb /></ScrollTrack>
                    </NavBody>
                </Nav>
                <Side>
                    <Panel $height={370}>
                        <PanelGrip />
                        <PanelTabs>
                            <PanelTab $active>构件列表</PanelTab>
                            <PanelTab>图纸列表</PanelTab>
                        </PanelTabs>
                        <PanelTools>
                            <Tool><Glyph name="add" />新建<Caret $size={3} /></Tool>
                            <Tool><Glyph name="copy" />复制</Tool>
                            <Tool><Glyph name="trash" />删除</Tool>
                            <Tool><Glyph name="copyParts" />层间复制构件</Tool>
                        </PanelTools>
                        <SearchBox>
                            <input aria-label="搜索构件" placeholder="搜索构件..." />
                            <Glyph name="search" size={14} />
                        </SearchBox>
                        <Tree>
                            <Branch $indent={16}><Caret $size={5} />檩条</Branch>
                            <Branch $indent={41}><Caret $size={5} />屋面檩条</Branch>
                            <Branch $indent={75}><Leaf>LT1&nbsp; &lt;13&gt;</Leaf></Branch>
                        </Tree>
                    </Panel>
                    <Panel>
                        <PanelGrip />
                        <PanelTabs>
                            <PanelTab $active>属性</PanelTab>
                            <PanelTab>位置控点</PanelTab>
                            <PanelTab>图层管理</PanelTab>
                        </PanelTabs>
                        <Properties>
                            <thead>
                                <tr><th /><th>属性名称</th><th>属性值</th></tr>
                            </thead>
                            <tbody>
                                <tr><td>1</td><td /><td /></tr>
                            </tbody>
                        </Properties>
                    </Panel>
                </Side>
                <Splitter>
                    <SplitterHandle aria-label="收起" />
                </Splitter>
                <Viewport><Scene /></Viewport>
            </Workspace>
        </Shell>
        <Accent />
        <EditDialog />
        <Notice />
    </Screen>
);

export default App;
